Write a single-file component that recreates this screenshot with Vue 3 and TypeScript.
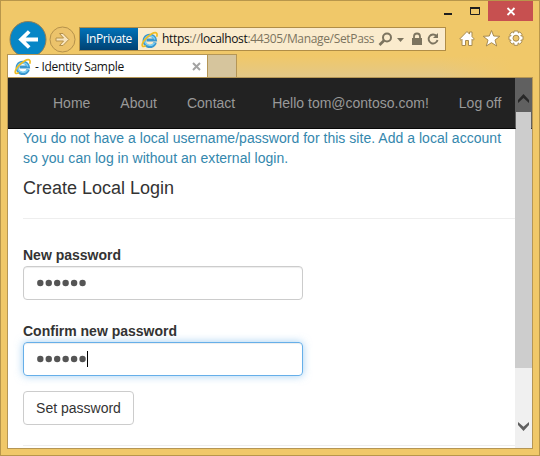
<script setup lang="ts">
import { ref } from 'vue'

const links = ref<string[]>(['Home', 'About', 'Contact'])
const dots = [0, 1, 2, 3, 4, 5]
const fields = [
  { label: 'New password', focused: false },
  { label: 'Confirm new password', focused: true },
]
</script>

<template>
  <div class="window">
    <header class="titlebar">
      <svg class="minmax" width="48" height="20" viewBox="0 0 48 20">
        <path d="M4 13h8" stroke="#1e1e1e" stroke-width="2" />
        <path d="M30.500 7v6.500h9V7" fill="none" stroke="#1e1e1e" />
        <path d="M30 7h10" stroke="#1e1e1e" stroke-width="2" />
      </svg>
      <button class="close" aria-label="Close">
        <svg width="45" height="20" viewBox="0 0 45 20"><path d="m19.500 7 7 7m0-7-7 7" stroke="#fff" stroke-width="1.800" /></svg>
      </button>
    </header>

    <div class="toolbar">
      <svg class="back" width="38" height="38" viewBox="0 0 38 38">
        <circle cx="19" cy="19.500" r="18" fill="#0786c6" stroke="#8f7f58" />
        <path d="M29 19.500H12.500m7.700-8-8.200 8 8.200 8" fill="none" stroke="#fff" stroke-width="3.800" />
      </svg>
      <svg class="forward" width="27" height="27" viewBox="0 0 27 27">
        <circle cx="13.500" cy="13.500" r="12.500" fill="#ecc36b" stroke="#b5914b" />
        <path d="M7 12h7.500l-4-4.500H14l5.800 6-5.800 6h-3.500l4-4.500H7z" fill="#f7e4bd" stroke="#b5914b" />
      </svg>
      <div class="address">
        <span class="private">InPrivate</span>
        <svg class="ie" width="17" height="17" viewBox="0 0 17 17">
          <path d="M14.200 11.300A5.600 5.600 0 1 1 14.300 9H5.500" fill="none" stroke="#3a97cf" stroke-width="3.200" />
          <path d="M13.600 11.600A5.300 5.300 0 0 1 3.700 9 5.300 5.300 0 0 1 13.800 8.500" fill="none" stroke="#7fd0f2" stroke-width="1.500" />
          <path d="M15.700 5.800c.8-2.500.3-4.300-1.500-4.200C10 1.800 2.300 9.200 1.300 13.300c-.5 2.200 1 2.800 3.600 1.500" fill="none" stroke="#efbd24" stroke-width="1.700" />
        </svg>
        <span class="url"><b>https</b>://<b>localhost</b>:44305/Manage/SetPass</span>
        <svg class="tools" width="66" height="22" viewBox="0 0 66 22">
          <circle cx="9" cy="9.500" r="4" fill="none" stroke="#7c745f" stroke-width="2" />
          <path d="m6 12.500-4.500 4.500" stroke="#7c745f" stroke-width="2.600" />
          <path d="M19 10h7l-3.500 4z" fill="#7c745f" />
          <path d="M34 10h10v7H34z" fill="#7c745f" />
          <path d="M36 10V8.500a3 3 0 0 1 6 0V10" fill="none" stroke="#7c745f" stroke-width="1.800" />
          <path d="M58.500 8A4.500 4.500 0 1 0 59.500 12" fill="none" stroke="#7c745f" stroke-width="1.900" />
          <path d="M60 5v5h-5z" fill="#7c745f" />
        </svg>
      </div>
      <svg class="actions" width="66" height="18" viewBox="0 0 66 18">
        <g fill="#fff" stroke="#a88b50" stroke-width="1" stroke-linejoin="round">
          <path d="M.7 9 8 1.500l2.500 2.600V2h2.500v4.600L15.300 9l-1.300 1.300-1-1v6.200h-3.500v-5h-3v5H3V9.300l-1 1z" />
          <path d="m32.500.5 2.200 5.500 6.100.3-4.800 3.800 1.700 5.900-5.200-3.300-5.200 3.300L29 10.100l-4.800-3.800 6.100-.3z" />
          <path d="M55 1h4l.3 2 1.500-1.100 2.300 2.400-1.300 1.500 2.200.4v3.600l-2.200.4 1.300 1.600-2.400 2.300-1.500-1.200-.4 2.400h-3.600l-.4-2.400-1.600 1.200-2.300-2.300 1.200-1.600-2.100-.4V6.200l2.100-.4-1.200-1.500 2.300-2.400L54.700 3z" />
          <circle cx="57" cy="8.200" r="3" fill="#efc76b" />
        </g>
      </svg>
    </div>

    <div class="tabs">
      <div class="tab">
        <svg class="ie" width="17" height="17" viewBox="0 0 17 17">
          <path d="M14.200 11.300A5.600 5.600 0 1 1 14.300 9H5.500" fill="none" stroke="#3a97cf" stroke-width="3.200" />
          <path d="M13.600 11.600A5.300 5.300 0 0 1 3.700 9 5.300 5.300 0 0 1 13.800 8.500" fill="none" stroke="#7fd0f2" stroke-width="1.500" />
          <path d="M15.700 5.800c.8-2.500.3-4.300-1.500-4.200C10 1.800 2.300 9.200 1.300 13.300c-.5 2.200 1 2.800 3.600 1.500" fill="none" stroke="#efbd24" stroke-width="1.700" />
        </svg>
        <span class="tab-title">- Identity Sample</span>
        <svg class="tab-close" width="9" height="9" viewBox="0 0 9 9"><path d="m1 1 7 7m0-7-7 7" stroke="#a3a3a3" stroke-width="2" /></svg>
      </div>
      <div class="new-tab"></div>
    </div>

    <div class="viewport">
      <div class="page">
        <nav>
          <a v-for="l in links" :key="l">{{ l }}</a>
          <a class="user">Hello tom@contoso.com!</a>
          <a>Log off</a>
        </nav>
        <main>
          <p class="info">You do not have a local username/password for this site. Add a local account so you can log in without an external login.</p>
          <h4>Create Local Login</h4>
          <hr />
          <form>
            <div v-for="f in fields" :key="f.label" class="group">
              <label>{{ f.label }}</label>
              <div class="input" :class="{ focused: f.focused }">
                <svg width="50" height="8" viewBox="0 0 50 8">
                  <circle v-for="d in dots" :key="d" :cx="3.300 + d * 8.450" cy="4" r="3.200" fill="#555" />
                </svg>
                <span v-if="f.focused" class="caret"></span>
              </div>
            </div>
            <button type="button" class="submit">Set password</button>
          </form>
          <hr class="last" />
        </main>
      </div>
      <div class="scrollbar">
        <div class="arrow up"><svg width="11" height="10" viewBox="0 0 11 10"><path d="M0 9V6L5.500 0 11 6v3L5.500 4z" fill="#282828" /></svg></div>
        <div class="thumb"></div>
        <div class="arrow down"><svg width="11" height="9" viewBox="0 0 11 9"><path d="M0 0v3l5.500 6L11 3V0L5.500 4.800z" fill="#606060" /></svg></div>
      </div>
    </div>
  </div>
</template>

<style>
body { margin: 0; overflow: hidden; }
</style>

<style scoped>
* { box-sizing: border-box; }
.window {
  width: 540px; height: 456px; border: 1px solid #b8964b; background: #f0c869;
  display: flex; flex-direction: column; padding: 0 6px 6px; font-family: "Liberation Sans", Arial, sans-serif;
}
svg { display: block; flex: none; }
.titlebar { height: 26px; display: flex; justify-content: flex-end; align-items: flex-start; flex: none; }
.close { width: 45px; height: 20px; padding: 0; border: 0; background: #c75050; }
.toolbar { height: 24px; display: flex; align-items: center; flex: none; }
.back { margin-left: 2px; }
.forward { margin-left: 2px; }
.address {
  margin-left: 3px; width: 367px; height: 24px; display: flex; align-items: center;
  border: 1px solid #b08d46; background: #faebcd; overflow: hidden; flex: none;
}
.private {
  width: 58px; height: 22px; background: linear-gradient(#0072b8, #004273); color: #fff;
  font: 12px/21px "Open Sans", "Noto Sans", sans-serif; text-align: center; letter-spacing: -.4px; flex: none;
}
.address .ie { margin-left: 3px; }
.url {
  margin-left: 4px; width: 214px; white-space: nowrap; color: #7c745f;
  font: 12px/22px "Open Sans", "Noto Sans", sans-serif; flex: none; letter-spacing: -.34px;
}
.url b { font-weight: 400; color: #111; }
.tools { margin-left: 2px; }
.actions { margin-left: 13px; }
.tabs {
  height: 26px; padding: 3px 0 0; display: flex; flex: none; position: relative;
  background: linear-gradient(90deg, transparent 82%, #f0c869 96%), linear-gradient(#f0c869 20%, #e3c887);
  background-clip: content-box;
}
.tab {
  width: 201px; height: 23px; display: flex; align-items: center; background: #fff;
  border: 1px solid #b59655; border-bottom: 0; padding-left: 6px; flex: none;
}
.tab-title { margin-left: 4px; color: #111; font: 12px/21px "Open Sans", "Noto Sans", sans-serif; letter-spacing: -.3px; white-space: nowrap; }
.tab-close { margin-left: auto; margin-right: 6px; }
.new-tab { width: 29px; height: 23px; background: #d6c59d; border: 1px solid #b59655; border-left: 0; border-bottom: 0; }
.viewport { width: 526px; height: 372px; border: 1px solid #b59655; display: flex; overflow: hidden; flex: none; background: #fff; }
.page { width: 507px; height: 370px; overflow: hidden; flex: none; }
nav {
  height: 51px; display: flex; align-items: flex-start; padding: 15px 0 0 45px; gap: 30px;
  background: #222; border-bottom: 1px solid #080808; color: #999; font-size: 14px; line-height: 20px; white-space: nowrap;
}
nav .user { margin-left: 7px; }
main { padding-left: 15px; color: #333; font-size: 14px; line-height: 20px; }
.info { width: 490px; margin: -1px 0 0; color: #3487ad; letter-spacing: .03px; }
h4 { margin: 10px 0 0; font-size: 18px; line-height: 20px; font-weight: 400; }
hr { margin: 20px 0 0; border: 0; border-top: 1px solid #eee; }
form { padding-top: 26px; }
.group { margin-bottom: 21px; }
.group + .group { margin-bottom: 15px; }
label { display: block; font-weight: 700; margin-bottom: 1px; }
.input {
  width: 280px; height: 34px; display: flex; align-items: center; padding-left: 13px;
  border: 1px solid #ccc; border-radius: 4px; box-shadow: inset 0 1px 1px rgba(0, 0, 0, .075);
}
.focused { border-color: #66afe9; box-shadow: inset 0 1px 1px rgba(0, 0, 0, .075), 0 0 8px rgba(102, 175, 233, .6); }
.caret { width: 1px; height: 16px; background: #000; }
.submit {
  display: block; width: 111px; height: 34px; padding: 0; border: 1px solid #ccc; border-radius: 4px;
  background: #fff; color: #333; font: 14px/20px "Liberation Sans", Arial, sans-serif;
}
.scrollbar {
  width: 17px; height: 370px; display: flex; flex-direction: column; flex: none;
  background: linear-gradient(#606060 50px, #303030 50px, #303030 51px, #f0f0f0 51px);
}
.arrow { display: flex; justify-content: center; flex: none; }
.up { height: 34px; padding-top: 16px; }
.thumb { height: 256px; background: linear-gradient(#cdcdcd, #cdcdcd) 1px 0 / 15px 17px no-repeat, linear-gradient(transparent 17px, #cdcdcd 17px); flex: none; }
.down { padding-top: 54px; }
</style>
